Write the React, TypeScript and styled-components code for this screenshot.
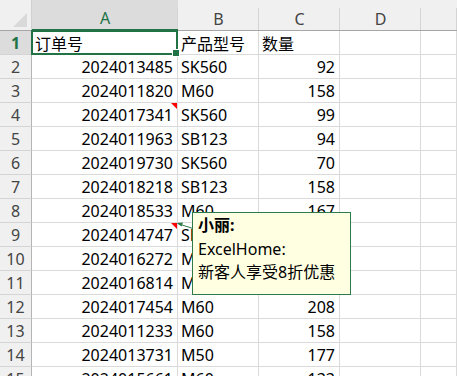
import React from 'react';
import styled, { createGlobalStyle } from 'styled-components';

const GREEN = '#217346';
const GRID = '#dadada';

const GlobalStyle = createGlobalStyle`
	html, body {
		margin: 0;
		padding: 0;
		background: #ffffff;
		overflow: hidden;
	}
	body {
		font-family: 'Noto Sans', 'Noto Sans CJK SC', sans-serif;
		color: #000000;
	}
`;

const COLUMNS = ['A', 'B', 'C', 'D', ''];

const ROWS: [string, string, string][] = [
	['订单号', '产品型号', '数量'],
	['2024013485', 'SK560', '92'],
	['2024011820', 'M60', '158'],
	['2024017341', 'SK560', '99'],
	['2024011963', 'SB123', '94'],
	['2024019730', 'SK560', '70'],
	['2024018218', 'SB123', '158'],
	['2024018533', 'M60', '167'],
	['2024014747', 'SB123', '136'],
	['2024016272', 'M60', '121'],
	['2024016814', 'M50', '185'],
	['2024017454', 'M60', '208'],
	['2024011233', 'M60', '158'],
	['2024013731', 'M50', '177'],
	['2024015661', 'M60', '133'],
];

// rows whose A cell carries a comment marker
const COMMENTED = [4, 9];

const isNumber = (v: string) => /^\d+$/.test(v);

const App = () => {
	return (
		<>
			<GlobalStyle />
			<Sheet>
				<Corner>
					<CornerMark />
				</Corner>
				{COLUMNS.map((c, i) => (
					<ColHeader key={i} $active={c === 'A'}>
						{c}
					</ColHeader>
				))}
				{ROWS.map((row, r) => (
					<React.Fragment key={r}>
						<RowHeader $active={r === 0}>{r + 1}</RowHeader>
						{row.map((v, c) => (
							<Cell key={c} $right={isNumber(v)}>
								{v}
								{c === 0 && COMMENTED.includes(r + 1) && <CommentMark />}
							</Cell>
						))}
						<Cell $right={false} />
						<Cell $right={false} />
					</React.Fragment>
				))}

				<Selection>
					<FillHandle />
				</Selection>

				<Arrow width="17" height="10" viewBox="0 0 17 10">
					<line x1="3" y1="3" x2="17" y2="7.5" stroke="#2f7a4a" strokeWidth="1" />
					<polygon points="0.5,2 7,1.5 5.5,5.5" fill="#2f7a4a" />
				</Arrow>

				<Comment>
					<CommentAuthor>小丽:</CommentAuthor>
					<CommentLine>ExcelHome:</CommentLine>
					<CommentLine>新客人享受8折优惠</CommentLine>
				</Comment>
			</Sheet>
		</>
	);
};

const Sheet = styled.div`
	position: relative;
	display: grid;
	grid-template-columns: 32px 146px 81px 81px 81px 1fr;
	grid-template-rows: 31px;
	grid-auto-rows: 24px;
	width: 457px;
	font-size: 16px;
`;

const Corner = styled.div`
	position: relative;
	background: #f0f0f0;
	border-bottom: 1px solid #a6a6a6;
	border-right: 1px solid #d0d0d0;
	box-sizing: border-box;
`;

const CornerMark = styled.div`
	position: absolute;
	right: 4px;
	bottom: 3px;
	width: 0;
	height: 0;
	border-left: 14px solid transparent;
	border-bottom: 14px solid #d9d9d9;
`;

const ColHeader = styled.div<{ $active: boolean }>`
	position: relative;
	display: flex;
	align-items: center;
	justify-content: center;
	padding-top: 7px;
	box-sizing: border-box;
	background: ${(p) => (p.$active ? '#dcdcdc' : '#f0f0f0')};
	color: ${(p) => (p.$active ? GREEN : '#444444')};
	border-bottom: ${(p) => (p.$active ? `2px solid ${GREEN}` : '1px solid #a6a6a6')};
	font-size: 16px;

	&::after {
		content: '';
		position: absolute;
		right: 0;
		top: 8px;
		bottom: 0;
		width: 1px;
		background: #d4d4d4;
	}
`;

const RowHeader = styled.div<{ $active: boolean }>`
	display: flex;
	align-items: center;
	justify-content: center;
	box-sizing: border-box;
	background: ${(p) => (p.$active ? '#dcdcdc' : '#f0f0f0')};
	color: ${(p) => (p.$active ? GREEN : '#444444')};
	font-weight: ${(p) => (p.$active ? 700 : 400)};
	border-right: 1px solid #b4b4b4;
	border-bottom: 1px solid #d4d4d4;
	font-size: 16px;
`;

const Cell = styled.div<{ $right: boolean }>`
	position: relative;
	display: flex;
	align-items: center;
	justify-content: ${(p) => (p.$right ? 'flex-end' : 'flex-start')};
	padding: 0 4px 0 3px;
	box-sizing: border-box;
	border-right: 1px solid ${GRID};
	border-bottom: 1px solid ${GRID};
	white-space: nowrap;
	overflow: hidden;
	color: #000000;
`;

const CommentMark = styled.span`
	position: absolute;
	top: 0;
	right: 0;
	width: 0;
	height: 0;
	border-left: 6px solid transparent;
	border-top: 6px solid #ff0000;
`;

const Selection = styled.div`
	position: absolute;
	left: 31px;
	top: 30px;
	width: 147px;
	height: 25px;
	border: 2px solid ${GREEN};
	box-sizing: border-box;
	pointer-events: none;
`;

const FillHandle = styled.div`
	position: absolute;
	right: -4px;
	bottom: -4px;
	width: 6px;
	height: 6px;
	background: ${GREEN};
	border: 1px solid #ffffff;
`;

const Arrow = styled.svg`
	position: absolute;
	left: 176px;
	top: 221px;
`;

const Comment = styled.div`
	position: absolute;
	left: 192px;
	top: 212px;
	width: 159px;
	height: 83px;
	box-sizing: border-box;
	padding: 1px 5px 0;
	background: #ffffe1;
	border: 1px solid #2f7a4a;
	line-height: 23.5px;
	font-size: 16px;
	color: #000000;
`;

const CommentAuthor = styled.div`
	font-weight: 700;
`;

const CommentLine = styled.div``;

export default App;
